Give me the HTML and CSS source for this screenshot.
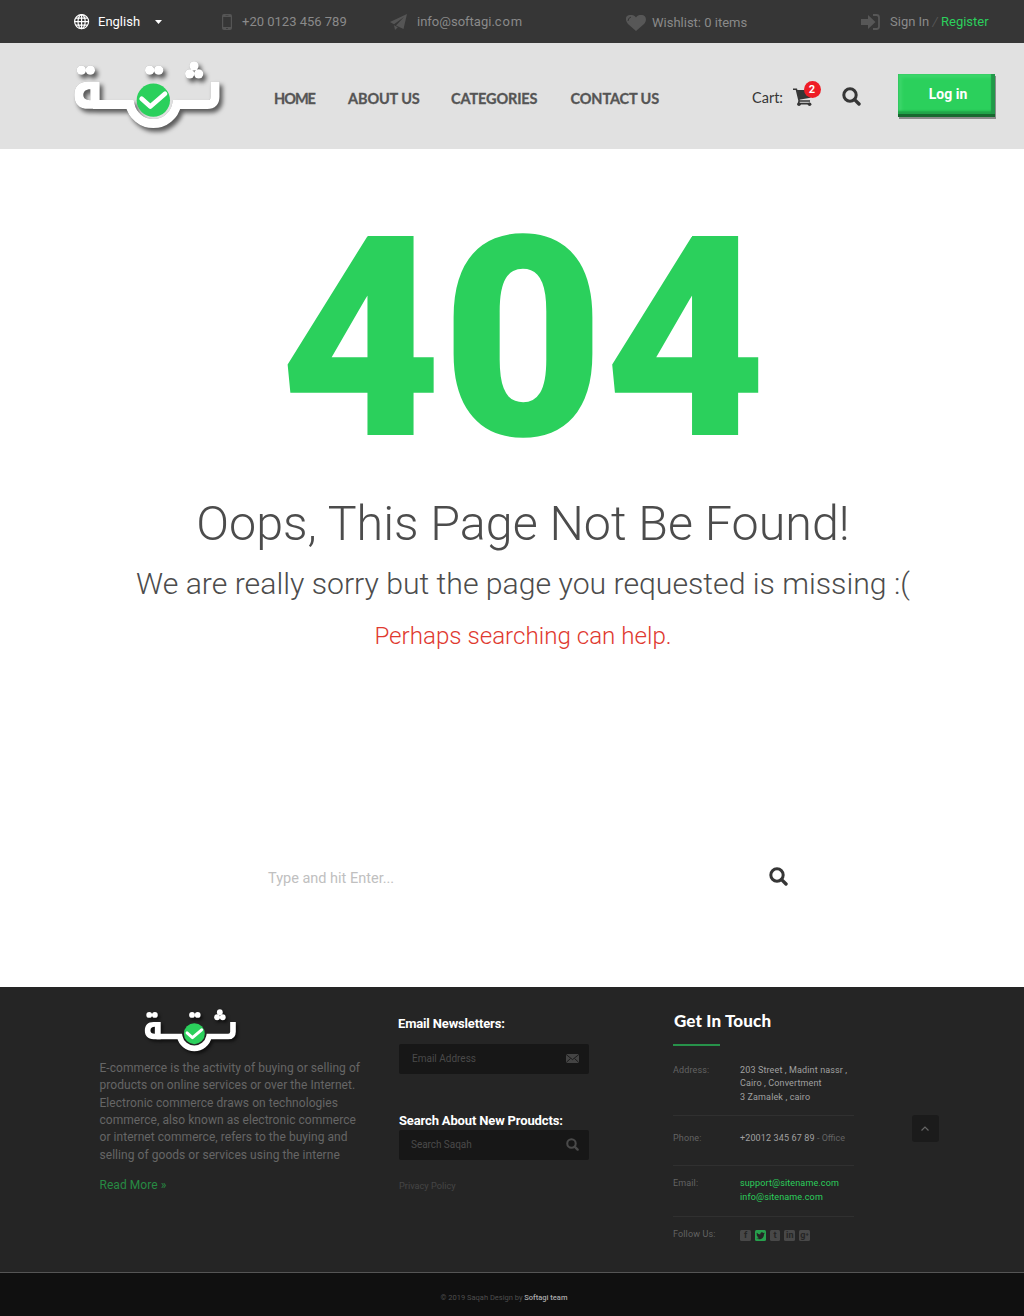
FILE: index.html
```html
<!DOCTYPE html>
<html lang="en">
<head>
<meta charset="utf-8">
<title>Page not found</title>
<link rel="stylesheet" href="styles.css">
</head>
<body>
<svg class="sprite" aria-hidden="true">
  <symbol id="logo" viewBox="40 175 450 215" overflow="visible">
    <g class="logo-shape">
      <path class="logo-line" d="M466 242V288Q466 311 443 311H351A71.4 71.4 0 0 1 211 311H100"/>
      <path class="logo-fill" fill-rule="evenodd" d="M120 242H86C58 242 44 257 44 283S58 324 86 324H120ZM92 265V298C78 298 71 292 71 282S78 265 92 265Z"/>
      <circle cx="65" cy="208" r="14"/><circle cx="92" cy="208" r="14"/>
      <circle cx="270" cy="208" r="14"/><circle cx="297" cy="208" r="14"/>
      <circle cx="403" cy="195" r="14"/><circle cx="390" cy="219" r="14"/><circle cx="417" cy="219" r="14"/>
    </g>
    <circle class="logo-disc" cx="281" cy="298" r="50"/>
    <path class="logo-check" d="M246 294L272 317L316 279"/>
  </symbol>
  <symbol id="search" viewBox="0 0 19 19">
    <circle cx="8" cy="8" r="6.2" fill="none" stroke="currentColor" stroke-width="3"/>
    <path d="M12.6 12.6L17 17" stroke="currentColor" stroke-width="3.4" stroke-linecap="round"/>
  </symbol>
</svg>

<div class="topbar">
  <div class="top-item lang">
    <svg width="16" height="16" viewBox="0 0 16 16" fill="none" stroke="#fff" stroke-width="1.2"><circle cx="7.6" cy="7.6" r="7"/><ellipse cx="7.6" cy="7.6" rx="3.6" ry="7"/><path d="M7.6 .6V14.6M.6 7.6H14.6M1.6 4.1H13.6M1.6 11.1H13.6"/></svg>
    <span>English</span>
    <svg class="caret" width="7" height="4" viewBox="0 0 7 4"><path d="M0 0H7L3.5 4Z" fill="#fff"/></svg>
  </div>
  <div class="top-item phone">
    <svg width="10" height="16" viewBox="0 0 10 16"><path fill="#555" fill-rule="evenodd" d="M2 0H8Q10 0 10 2V14Q10 16 8 16H2Q0 16 0 14V2Q0 0 2 0ZM1.2 3V13H8.8V3ZM3.5 1.2V1.8H6.5V1.2ZM4 14.2V15H6V14.2Z"/></svg>
    <span>+20 0123 456 789</span>
  </div>
  <div class="top-item mail">
    <svg width="17" height="16" viewBox="0 0 17 16" fill="#555"><path d="M17 0L0 8L4 10.3L14 3L6 11.4L13.5 15ZM4 11.3L5 16L7.8 13.2Z"/></svg>
    <span>info@softagi.<span class="wide">com</span></span>
  </div>
  <div class="top-item wish">
    <svg width="20" height="16" viewBox="0 0 20 16"><path d="M10 16L2 9C-1 5-.5 2 1.5 .8C4-.8 8-.3 10 2.5C12-.5 16-.8 18.5 1C20.5 3 20.5 6 18 9Z" fill="#575757"/><path d="M2 6Q2 3 5 2" fill="none" stroke="#363636" stroke-width="1"/></svg>
    <span>Wishlist: 0 items</span>
  </div>
  <div class="top-item sign">
    <svg width="19" height="16" viewBox="0 0 19 16"><path fill="#575757" d="M0 5H7V1L14.5 8L7 15V11H0Z"/><path d="M12 1H15.5Q18 1 18 3.5V12.5Q18 15 15.5 15H12" fill="none" stroke="#575757" stroke-width="1.8"/></svg>
    <span>Sign In <i>/</i> <a>Register</a></span>
  </div>
</div>

<header class="header">
  <svg class="logo" width="150" height="72"><use href="#logo"/></svg>
  <nav class="nav"><a class="home">HOME</a><a>ABOUT US</a><a>CATEGORIES</a><a>CONTACT US</a></nav>
  <div class="cart">
    <span>Cart:</span>
    <div class="cart-icon">
      <svg width="20" height="18" viewBox="0 0 20 18"><path d="M0 1.2H3.4L6.2 13H17M6.2 12.6L5.4 15.6H17" fill="none" stroke="#363636" stroke-width="1.6"/><path d="M3.8 2H19.5L17.5 9.8L6 11.8Z" fill="#363636"/><circle cx="6" cy="16.2" r="1.8" fill="#363636"/><circle cx="16.6" cy="16.2" r="1.8" fill="#363636"/></svg>
      <b class="badge">2</b>
    </div>
  </div>
  <svg class="header-search" width="19" height="19"><use href="#search"/></svg>
  <button class="login">Log in</button>
</header>

<main class="main">
  <h1>404</h1>
  <h2>Oops, This Page Not Be Found!</h2>
  <p class="sorry">We are really sorry but the page you requested is missing :(</p>
  <p class="hint">Perhaps searching can help.</p>
  <div class="search">
    <span>Type and hit Enter...</span>
    <svg width="19" height="19"><use href="#search"/></svg>
  </div>
</main>

<footer class="footer">
  <section class="about">
    <svg class="footer-logo" width="94" height="45"><use href="#logo"/></svg>
    <p>E-commerce is the activity of buying or selling of<br>products on online services or over the Internet.<br>Electronic commerce draws on technologies<br>commerce, also known as electronic commerce<br>or internet commerce, refers to the buying and<br>selling of goods or services using the interne</p>
    <a>Read More »</a>
  </section>
  <section class="forms">
    <h3>Email Newsletters:</h3>
    <div class="field">
      <span>Email Address</span>
      <svg width="13" height="9" viewBox="0 0 13 9"><rect width="13" height="9" rx="1.5" fill="#444"/><path d="M.5 .8L6.5 5.6L12.5 .8M.5 8.2L4.5 4.5M12.5 8.2L8.5 4.5" fill="none" stroke="#171717" stroke-width=".9"/></svg>
    </div>
    <h3 class="second">Search About New Proudcts:</h3>
    <div class="field query">
      <span>Search Saqah</span>
      <svg width="13" height="13"><use href="#search"/></svg>
    </div>
    <a class="privacy">Privacy Policy</a>
  </section>
  <section class="contact">
    <h4>Get In Touch</h4>
    <div class="rule"></div>
    <div class="row address"><span>Address:</span><div>203 Street , Madint nassr ,<br>Cairo , Convertment<br>3 Zamalek , cairo</div></div>
    <div class="row tel"><span>Phone:</span><div>+20012 345 67 89 <em>- Office</em></div></div>
    <div class="row email"><span>Email:</span><div>support@sitename.com<br>info@sitename.com</div></div>
    <div class="row follow"><span>Follow Us:</span>
      <div class="social"><b>f</b><b class="on"><svg width="9" height="8" viewBox="0 0 9 8"><path d="M0 6.5Q2 6.8 3 6Q1.5 5.7 1.3 4.8L1.8 4.7Q.6 4 .6 2.8L1.2 3Q.2 2 .9 .8Q2.2 2.4 4.3 2.5C4.1 .2 6.5-.2 7.3 .9L8.6 .5L8 1.4L9 1.2L8 2.3C8 6.5 4.2 8.6 0 6.5Z" fill="#252525"/></svg></b><b>t</b><b>in</b><b class="gplus">g<sup>+</sup></b></div>
    </div>
  </section>
  <a class="to-top"><svg width="8" height="5" viewBox="0 0 8 5"><path d="M.5 4.5L4 1L7.5 4.5" fill="none" stroke="#666" stroke-width="1.2"/></svg></a>
</footer>
<div class="copyright">© 2019 Saqah Design by <b>Softagi team</b></div>
</body>
</html>
```
FILE: styles.css
```css
* { box-sizing: border-box; }
body { margin: 0; width: 1024px; background: #fff; font-family: Roboto, "Liberation Sans", sans-serif; }
h1, h2, h3, h4, p { margin: 0; font-weight: 400; }
svg { display: block; flex: none; }
.sprite { position: absolute; width: 0; height: 0; }

.logo-shape { fill: #fff; filter: drop-shadow(0 0 1px rgba(0, 0, 0, .35)) drop-shadow(9px 11px 7px rgba(0, 0, 0, .6)); }
.logo-line { fill: none; stroke: #fff; stroke-width: 27px; }
.logo-disc { fill: #2bd05c; }
.logo-check { fill: none; stroke: #fff; stroke-width: 14px; stroke-linecap: round; stroke-linejoin: round; }

.topbar { height: 43px; padding-left: 74px; background: #363636; display: grid; grid-template-columns: 148px 168px 236px 235px auto; align-items: center; font-size: 13px; line-height: 16px; color: #8a8a8a; white-space: nowrap; }
.top-item { display: flex; align-items: center; }
.lang { color: #fff; gap: 8px; }
.caret { margin-left: 7px; }
.phone { gap: 10px; }
.mail { gap: 10px; }
.wide { letter-spacing: .9px; }
.wish { gap: 6px; padding-top: 2px; }
.sign { gap: 10px; }
.sign i { color: #555; }
.sign a { color: #2bd05c; }

.header { height: 106px; background: #e1e1e1; display: flex; align-items: flex-start; color: #555; }
.logo { margin: 16px 0 0 73px; overflow: visible; }
.nav { display: grid; grid-template-columns: 74px 103px 119.5px auto; margin: 47px 0 0 51px; width: 478px; font: 700 14.5px/18px Lato, sans-serif; letter-spacing: -.12px; white-space: nowrap; -webkit-text-stroke: .3px #555; }
.home { letter-spacing: -1px; }
.cart { display: flex; width: 90px; margin-top: 45px; font: 14.5px/20px Lato, sans-serif; color: #363636; }
.cart > span { width: 40.5px; }
.cart-icon { position: relative; }
.badge { position: absolute; left: 11px; top: -7px; width: 17px; height: 17px; border-radius: 50%; background: #ee1c25; color: #fff; text-align: center; font: 700 11px/17px Roboto, sans-serif; }
.header-search { margin-top: 44px; color: #363636; }
.login { margin: 31px 0 0 37px; width: 97px; height: 43px; padding: 0 0 4px 3px; border: 0; background: #2bd05c; box-shadow: inset 0 -3px 0 #17682f, inset -4px 0 1px #22994a, inset 0 -6px 2px #20a348, inset 4px 4px 3px #3bd66a, 1px 2px 0 #8b8b8b; color: #fff; font: 700 14px/18px Roboto, sans-serif; }

.main { height: 838px; text-align: center; white-space: nowrap; }
h1 { height: 328px; padding: 65px 0 0 22px; font-size: 280px; line-height: 250px; font-weight: 900; color: #2bd05c; }
h2 { height: 60px; margin-top: 16px; padding-left: 22px; font-size: 48.4px; line-height: 61px; font-weight: 300; color: #4c4c4c; }
.sorry { margin-top: 12px; padding-left: 22px; font-size: 30.2px; line-height: 38px; font-weight: 300; color: #4c4c4c; }
.hint { margin-top: 18px; padding-left: 22px; font-size: 24.15px; line-height: 30px; font-weight: 300; color: #e0392f; }
.search { display: flex; justify-content: space-between; align-items: flex-start; width: 520px; margin: 216px 0 0 268px; color: #363636; }
.search span { padding-top: 2px; font-size: 14.5px; line-height: 19px; color: #c0c0c0; }

.footer { height: 286px; padding-left: 99px; display: flex; align-items: flex-start; background: #252525; border-bottom: 1px solid #555; white-space: nowrap; }
.about { width: 300px; padding-left: .5px; font-size: 12px; line-height: 17.35px; letter-spacing: .05px; color: #666; }
.footer-logo { margin: 21px 0 7px 44.4px; overflow: visible; }
.about a { display: block; margin-top: 13px; color: #278a43; }
.forms { width: 274px; }
h3 { padding-top: 29px; height: 57px; margin-left: -1px; font-size: 13px; line-height: 16px; font-weight: 700; color: #fff; letter-spacing: -.15px; }
h3.second { padding-top: 39px; height: 56px; margin-left: 0; }
.field { display: flex; align-items: center; justify-content: space-between; width: 190px; height: 30px; padding: 0 10px 1px 13px; background: #171717; border-radius: 2px; font-size: 10px; color: #4a4a4a; }
.query { padding-left: 12px; letter-spacing: -.05px; }
.privacy { display: block; margin-top: 20px; font-size: 9.2px; line-height: 12px; color: #464646; }
.contact { width: 239px; font-size: 9px; line-height: 13.6px; letter-spacing: .13px; color: #a0a0a0; }
h4 { padding: 23px 0 0 1px; height: 57px; font: 900 17px/21px Lato, sans-serif; letter-spacing: .15px; color: #fff; }
.rule { width: 47px; height: 2px; margin-left: .4px; background: #27924a; }
.row { display: grid; grid-template-columns: 67px 1fr; width: 181px; border-bottom: 1px solid #303030; }
.row > span { color: #636363; }
.row em { font-style: normal; letter-spacing: 0; color: #636363; }
.address { height: 70px; padding-top: 17.5px; }
.tel { height: 50px; padding-top: 16px; }
.email { height: 51px; padding-top: 11px; }
.email div { color: #2bd05c; }
.follow { padding-top: 11px; border: 0; }
.social { display: flex; gap: 4px; padding: 2px 0 0 .4px; letter-spacing: 0; }
.social b { display: flex; align-items: center; justify-content: center; width: 10.7px; height: 11px; border-radius: 1.5px; background: #484848; color: #252525; font-size: 9px; line-height: 11px; }
.social .on { background: #27a04d; }
.social sup { font-size: 6px; line-height: 6px; margin-bottom: 3px; }
.to-top { display: flex; align-items: center; justify-content: center; width: 27px; height: 27px; margin-top: 128.4px; padding: 0 1px 0 0; background: #1b1b1b; border-radius: 3px; }
.copyright { height: 43px; padding-right: 16px; background: #101010; text-align: center; font-size: 7.5px; line-height: 49px; color: #4e4e4e; }
.copyright b { font-weight: 500; color: #aaa; }
```
